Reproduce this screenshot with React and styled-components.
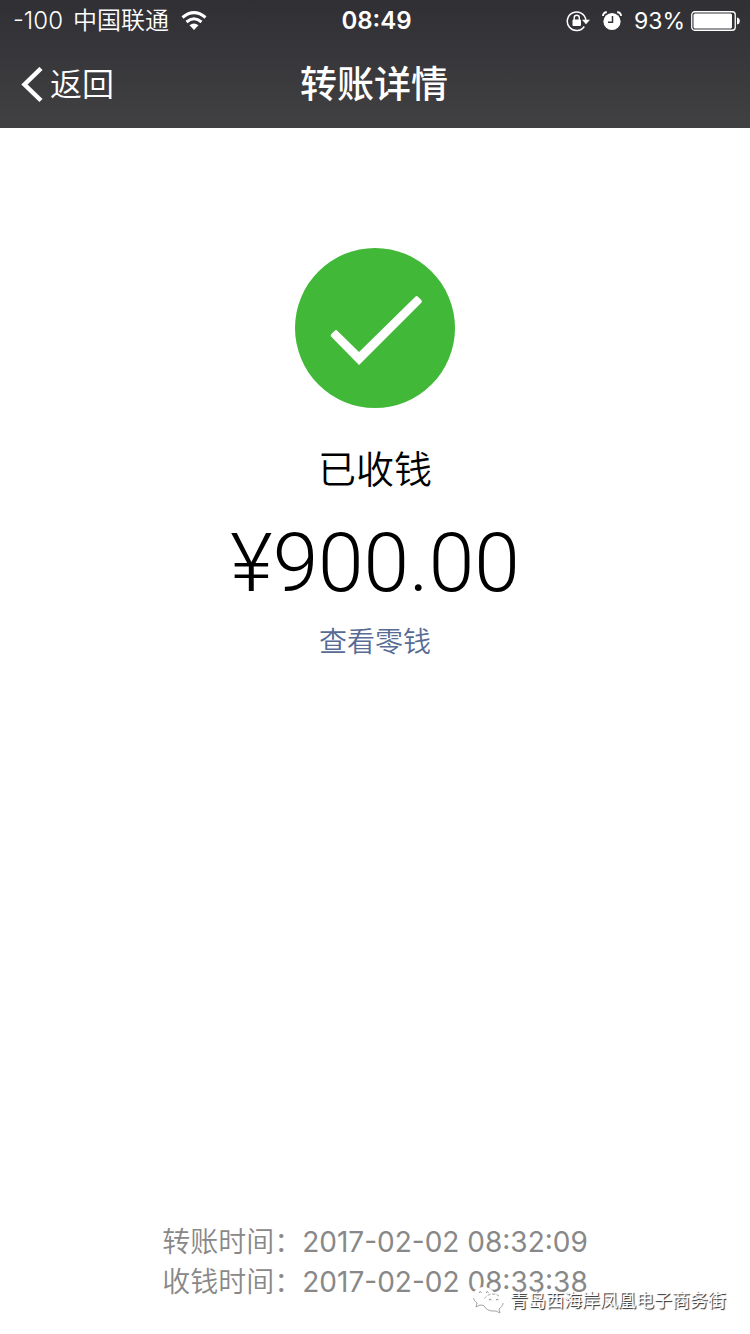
import React from "react";
import styled, { createGlobalStyle } from "styled-components";

const GlobalStyle = createGlobalStyle`
  * { box-sizing: border-box; }
  body {
    margin: 0;
    background: #fff;
    color: #000;
    font-family: Inter, "Noto Sans CJK SC", sans-serif;
  }
`;

const Page = styled.div`
  position: relative;
  min-height: 100vh;
  display: flex;
  flex-direction: column;
`;

const Header = styled.header`
  background: linear-gradient(#302f34, #414042);
  color: #fff;
`;

const StatusBar = styled.div`
  display: grid;
  grid-template-columns: 1fr auto 1fr;
  align-items: center;
  height: 42px;
  padding: 0 10px 0 13px;
  font-size: 24px;
  line-height: 42px;
`;

const StatusGroup = styled.div`
  display: flex;
  align-items: center;
  justify-content: ${(p) => (p.$end ? "flex-end" : "flex-start")};
  gap: 12px;
  white-space: nowrap;
`;

const Carrier = styled.span`
  display: flex;
  gap: 10px;
  font-weight: 350;
`;

const Clock = styled.time`
  font-weight: 600;
`;

const BatteryLevel = styled.span`
  display: flex;
  align-items: center;
  gap: 6px;
  font-size: 23px;
`;

const Icon = styled.svg`
  display: block;
  flex: none;
`;

const NavBar = styled.nav`
  display: grid;
  grid-template-columns: 1fr auto 1fr;
  align-items: center;
  height: 86px;
  padding: 0 22px 0 20px;
`;

const BackButton = styled.button`
  justify-self: start;
  display: flex;
  align-items: center;
  gap: 6px;
  padding: 0;
  border: 0;
  background: none;
  color: inherit;
  font-family: inherit;
  font-size: 32px;
  font-weight: 350;
  line-height: 40px;
`;

const Title = styled.h1`
  margin: 0;
  font-size: 37px;
  font-weight: 500;
  line-height: 48px;
`;

const Result = styled.main`
  flex: 1;
  display: flex;
  flex-direction: column;
  align-items: center;
  padding-top: 120px;
`;

const Status = styled.p`
  margin: 37px 0 0;
  font-size: 38px;
  font-weight: 350;
  line-height: 48px;
`;

const Amount = styled.p`
  margin: 22px 0 0;
  font-family: Roboto, sans-serif;
  font-size: 82px;
  font-weight: 300;
  line-height: 96px;
`;

const BalanceLink = styled.a`
  margin-top: 11px;
  color: #576b95;
  font-size: 28px;
  font-weight: 350;
  line-height: 40px;
  text-decoration: none;
`;

const Times = styled.footer`
  display: flex;
  flex-direction: column;
  align-items: center;
  padding-bottom: 32px;
  color: #888;
  font-size: 28px;
  line-height: 40px;
`;

const TimeRow = styled.div`
  display: flex;
  font-weight: 350;
`;

const TimeValue = styled.time`
  font-weight: 400;
`;

const Watermark = styled.div`
  position: absolute;
  right: 24px;
  bottom: 17px;
  display: flex;
  align-items: center;
  gap: 6px;
  color: #fff;
  font-size: 18px;
  line-height: 32px;
  text-shadow: 1px 1px 1px #222;
`;

function WifiIcon() {
  return (
    <Icon width="26" height="20" viewBox="0 0 26 20" fill="none" stroke="#fff" strokeWidth="3">
      <path d="M1.5 6.5Q13-3.2 24.5 6.5" />
      <path d="M5.5 11Q13 4.500 20.500 11" />
      <path d="M13 19l-4.500-4.800q4.500-3.600 9 0z" fill="#fff" stroke="none" />
    </Icon>
  );
}

function LockIcon() {
  return (
    <Icon width="24" height="22" viewBox="0 0 24 22">
      <path d="M18.300 16.500A9.300 9.300 0 1 1 19.800 10" fill="none" stroke="#fff" strokeWidth="1.500" />
      <path d="M16 9.700h8l-4 4.600z" fill="#fff" />
      <rect x="6.500" y="9.500" width="8.500" height="6.500" rx="1" fill="#fff" />
      <path d="M8.200 10V7.800a2.550 2.550 0 0 1 5.100 0V10" fill="none" stroke="#fff" strokeWidth="1.400" />
    </Icon>
  );
}

function AlarmIcon() {
  return (
    <Icon width="20" height="20" viewBox="0 0 20 20">
      <circle cx="10" cy="10.500" r="8.600" fill="#fff" />
      <path d="M.9 5Q1.200 1.600 4.800 1M19.100 5Q18.800 1.600 15.200 1" fill="none" stroke="#fff" strokeWidth="1.800" />
      <path d="M10.500 5v6.200H6" fill="none" stroke="#333237" strokeWidth="1.500" />
    </Icon>
  );
}

function BatteryIcon() {
  return (
    <Icon width="49" height="20" viewBox="0 0 49 20">
      <rect x=".75" y=".75" width="43.500" height="18.500" rx="3" fill="none" stroke="#fff" strokeWidth="1.300" />
      <rect x="2.500" y="2.500" width="38.500" height="15" rx="1.500" fill="#fff" />
      <path d="M46 6.500q2.800.5 2.800 3.500t-2.800 3.500z" fill="#fff" />
    </Icon>
  );
}

function BackIcon() {
  return (
    <Icon width="24" height="36" viewBox="0 0 24 36" fill="none" stroke="#fff" strokeWidth="4.500">
      <path d="M21 1.500L4.500 17.500l16.500 16" />
    </Icon>
  );
}

function SuccessIcon() {
  return (
    <Icon width="160" height="160" viewBox="0 0 160 160" role="img" aria-label="已收钱">
      <circle cx="80" cy="80" r="80" fill="#41b837" />
      <path
        d="M36.300 88.700Q35 87.400 36.300 86.100L39.700 82.700Q41 81.400 42.300 82.700L64 104L120.300 48.700Q121.600 47.400 122.900 48.700L126.300 52.100Q127.600 53.400 126.300 54.700L64 117Z"
        fill="#fff"
      />
    </Icon>
  );
}

function ChatIcon() {
  return (
    <Icon width="32" height="30" viewBox="0 0 32 30">
      <g fill="#fff">
        <path d="M12 1C5 1 1 5 1 10c0 3 1.500 5 4 7l-1 4 4-2c8 2 15-2 15-9 0-5-5-9-11-9z" />
        <path d="M21 8c-6 0-10 4-10 8.500S15 25 21 25l3 0 4 2-1-4c2-1.500 4-3.500 4-6.500C31 12 27 8 21 8z" />
      </g>
      <g fill="none" stroke="#999" strokeWidth=".9">
        <path d="M1.500 12c.5 2 1.500 3.500 3.500 5l-1 4 4-2 4 .5" />
        <path d="M12.500 12.500c2-3 5-4.500 8.500-4.500 3 0 5 1 7 3" strokeDasharray="3 1.500" />
        <path d="M12 20c1.500 3 5 5 9 5h3l4 2-1-4c2-1.500 4-3.500 4-6" />
        <path d="M7 6.500q1.500-1.500 2.500 0M14 6.500q1.500-1.500 2.500 0M17 14q1.500-1.500 2.500 0M24 14q1.500-1.500 2.500 0" stroke="#777" />
      </g>
    </Icon>
  );
}

const times = [
  { label: "转账时间：", value: "2017-02-02 08:32:09" },
  { label: "收钱时间：", value: "2017-02-02 08:33:38" },
];

export default function App() {
  return (
    <Page>
      <GlobalStyle />
      <Header>
        <StatusBar>
          <StatusGroup>
            <Carrier>
              <span>-100</span>
              <span>中国联通</span>
            </Carrier>
            <WifiIcon />
          </StatusGroup>
          <Clock>08:49</Clock>
          <StatusGroup $end>
            <LockIcon />
            <AlarmIcon />
            <BatteryLevel>
              93%
              <BatteryIcon />
            </BatteryLevel>
          </StatusGroup>
        </StatusBar>
        <NavBar>
          <BackButton type="button">
            <BackIcon />
            返回
          </BackButton>
          <Title>转账详情</Title>
        </NavBar>
      </Header>
      <Result>
        <SuccessIcon />
        <Status>已收钱</Status>
        <Amount>¥900.00</Amount>
        <BalanceLink href="#balance">查看零钱</BalanceLink>
      </Result>
      <Times>
        {times.map((t) => (
          <TimeRow key={t.label}>
            <span>{t.label}</span>
            <TimeValue>{t.value}</TimeValue>
          </TimeRow>
        ))}
      </Times>
      <Watermark>
        <ChatIcon />
        <span>青岛西海岸凤凰电子商务街</span>
      </Watermark>
    </Page>
  );
}
